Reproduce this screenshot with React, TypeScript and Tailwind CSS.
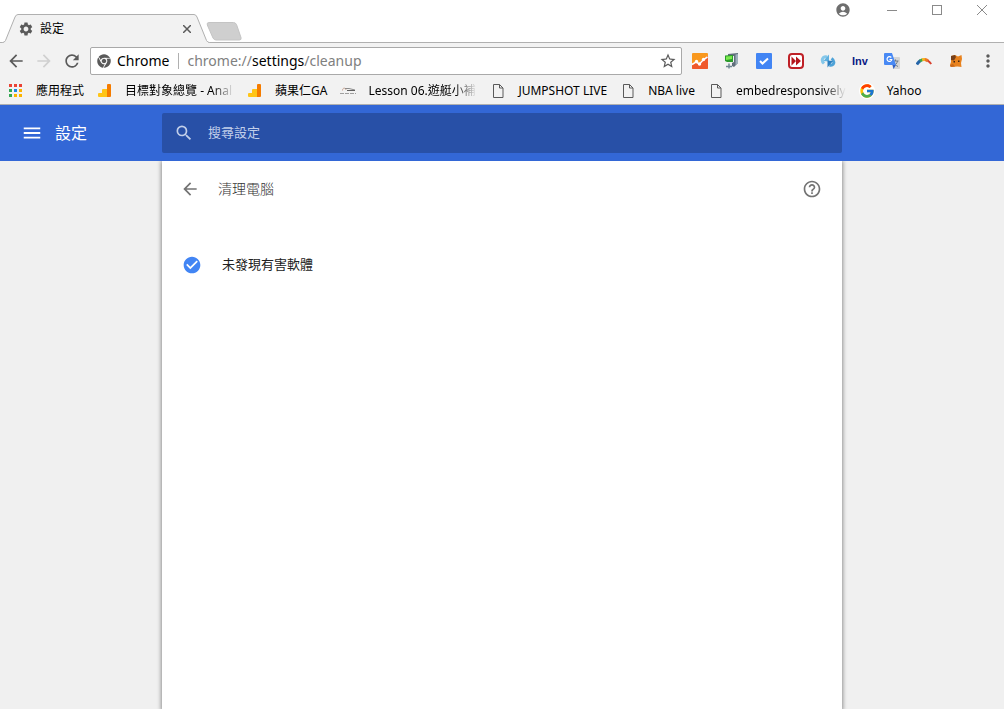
import { useState } from "react";
import type { ReactNode } from "react";
import clsx from "clsx";
import { FaChrome } from "react-icons/fa";
import { FcGoogle } from "react-icons/fc";
import {
  MdAccountCircle,
  MdArrowBack,
  MdArrowForward,
  MdCheckCircle,
  MdHelpOutline,
  MdMenu,
  MdMoreVert,
  MdRefresh,
  MdSearch,
  MdSettings,
  MdStarBorder,
} from "react-icons/md";

const AppsIcon = () => {
  const colors = [
    "#ea4335", "#ea4335", "#ea4335",
    "#34a853", "#1e88e5", "#fbb400",
    "#34a853", "#fbb400", "#fbb400",
  ];
  return (
    <svg viewBox="0 0 16 16" className="size-4">
      {colors.map((color, i) => (
        <rect key={i} x={1 + (i % 3) * 5} y={1 + Math.floor(i / 3) * 5} width="3" height="3" fill={color} />
      ))}
    </svg>
  );
};

const AnalyticsIcon = () => (
  <svg viewBox="0 0 16 16" className="size-4">
    <path d="M1 11a1 1 0 0 1 1-1h3V7a1 1 0 0 1 1-1h4v8H2a1 1 0 0 1-1-1z" fill="#ffc517" />
    <path d="M10 2a1 1 0 0 1 1-1h2a1 1 0 0 1 1 1v11a1 1 0 0 1-1 1h-3z" fill="#f57c00" />
  </svg>
);

const SketchIcon = () => (
  <svg viewBox="0 0 16 16" className="size-4" fill="none">
    <path d="M2.500 7.500c0-3 3-3 3.500-.5" stroke="#c9a491" />
    <path d="M5 5.500h4l6 1.500" stroke="#8c8c8c" />
    <path d="M7 7.500h8" stroke="#5f5f5f" />
    <path d="M0 10.500h16" strokeDasharray="4 1" stroke="#a0a0a0" />
  </svg>
);

const PageIcon = () => (
  <svg viewBox="0 0 16 16" className="size-4" fill="none" stroke="#5a5a5a">
    <path d="M3.500 1.500h6l3.500 3.500v9.500H3.500z" />
    <path d="M9.500 1.500V5H13" />
  </svg>
);

const ChartExtension = () => (
  <svg viewBox="0 0 16 16" className="size-4">
    <rect width="16" height="16" rx="1" fill="#f9981e" />
    <path d="M0 12.500L4 8l3 2.500 4-5L16 3v12a1 1 0 0 1-1 1H1a1 1 0 0 1-1-1z" fill="#f0592a" />
    <path d="M0 11.500l4-2.500 3.500 2 4-4.500L15.500 4" fill="none" stroke="#fff" strokeWidth="1.500" />
    <g fill="#fff">
      <circle cx="4.500" cy="8.500" r="1.700" />
      <circle cx="7.500" cy="11" r="1.700" />
      <circle cx="11.500" cy="6.500" r="1.700" />
    </g>
  </svg>
);

const CaptureExtension = () => (
  <svg viewBox="0 0 16 16" className="size-4">
    <path d="M4 1l10-1v10l-4 4-2-1v-3l2-1V3H4z" fill="#5f6f7b" />
    <path d="M11.500 1.500L14 1v9l-2.500 2z" fill="#9fb0bc" />
    <path d="M1 2.500L9 2v7H3L1 8z" fill="#2b9c2b" />
    <path d="M2 3.500L8 3v3L2 7z" fill="#7cea4e" />
    <path d="M5 10.500v5M2 13.500h6" stroke="#6f8792" strokeWidth="1.500" />
  </svg>
);

const CheckExtension = () => (
  <svg viewBox="0 0 16 16" className="size-4">
    <rect width="16" height="16" rx="1" fill="#4285f4" />
    <path d="M4 8l2.500 2.500L12 5.500" fill="none" stroke="#fff" strokeWidth="2" />
  </svg>
);

const SkipExtension = () => (
  <svg viewBox="0 0 16 16" className="size-4">
    <rect x="1" y="1" width="14" height="14" rx="3" fill="#fff" stroke="#bf2026" strokeWidth="2" />
    <path d="M3.500 3.500L8 8l-4.500 4.500zM8 3.500L13 8l-5 4.500z" fill="#b5161c" />
  </svg>
);

const SyncExtension = () => (
  <svg viewBox="0 0 16 16" className="size-4" fill="none">
    <path d="M4 10.500C.8 7.500 2.500 2.500 7 4" stroke="#84c7ea" strokeWidth="3" />
    <path d="M9 1.500v7L3.500 8z" fill="#5fb1e0" />
    <path d="M11.500 5.500c4 2.500 2.500 8-2 6.500" stroke="#4fa3d8" strokeWidth="3" />
    <path d="M7.500 14.500v-7L13 8z" fill="#2c7fbf" />
  </svg>
);

const TranslateExtension = () => (
  <svg viewBox="0 0 16 16" className="size-4">
    <path d="M7 4h8a1 1 0 0 1 1 1v10a1 1 0 0 1-1 1H9z" fill="#d5d5d5" />
    <path d="M8.500 8h6M11.500 6.500V8M13.500 8c-.5 2.500-2 4-4 5M10 9.500c1 2 2 3 4 4" fill="none" stroke="#6e7b86" strokeWidth="1" />
    <path d="M1 0h7l4 12H1a1 1 0 0 1-1-1V1a1 1 0 0 1 1-1z" fill="#4889f4" />
    <path d="M8.500 12H12l-2.500 4z" fill="#2f5fc4" />
    <path d="M7.300 4.500A2.400 2.400 0 1 0 7.800 6.500H5.500" fill="none" stroke="#fff" strokeWidth="1.200" />
  </svg>
);

const RainbowExtension = () => (
  <svg viewBox="0 0 16 16" className="size-4" fill="none" strokeWidth="3">
    <path d="M.8 11.500C2 9.800 3 8.600 4.500 7.600" stroke="#2565a8" />
    <path d="M4 8c.9-.7 1.600-1.100 2.600-1.400" stroke="#3fa447" />
    <path d="M6.200 6.700c1-.3 1.800-.4 2.800-.2" stroke="#f4b51f" />
    <path d="M8.800 6.500c1.200.2 2.200.7 3.200 1.500" stroke="#ee7724" />
    <path d="M11.700 7.600c1.300.8 2.400 1.900 3.500 3.400" stroke="#d8402d" strokeWidth="2" />
  </svg>
);

const FoxExtension = () => (
  <svg viewBox="0 0 16 16" className="size-4">
    <path d="M3 3l4-1 3 1.500L13.500 2l.5 4-1 4 .5 4-4-.500-6 .500-1.500-2L3 9z" fill="#e8821e" />
    <path d="M3 3l4-1 1 2-2 3.500L3 7z" fill="#75401b" />
    <path d="M2 12l3-1 2 2.500-4.500.5z" fill="#c9691a" />
    <path d="M5.500 8H7v1.500H5.500zM10 7.500h1.500V9H10z" fill="#3a2413" />
  </svg>
);

const extensions: { name: string; icon: ReactNode }[] = [
  { name: "Page analytics", icon: <ChartExtension /> },
  { name: "Screen capture", icon: <CaptureExtension /> },
  { name: "Tag assistant", icon: <CheckExtension /> },
  { name: "Skip", icon: <SkipExtension /> },
  { name: "Sync", icon: <SyncExtension /> },
  {
    name: "Inv",
    icon: <span className="font-['Liberation_Sans'] text-[11px] font-bold text-[#0b1a84]">Inv</span>,
  },
  { name: "Translate", icon: <TranslateExtension /> },
  { name: "Rainbow", icon: <RainbowExtension /> },
  { name: "Fox", icon: <FoxExtension /> },
  { name: "Menu", icon: <MdMoreVert className="size-5 text-[#5a5a5a]" /> },
];

const bookmarks: { name: string; icon: ReactNode; long?: boolean }[] = [
  { name: "應用程式", icon: <AppsIcon /> },
  { name: "目標對象總覽 - Anal", icon: <AnalyticsIcon />, long: true },
  { name: "蘋果仁GA", icon: <AnalyticsIcon /> },
  { name: "Lesson 06.遊艇小補", icon: <SketchIcon />, long: true },
  { name: "JUMPSHOT LIVE", icon: <PageIcon /> },
  { name: "NBA live", icon: <PageIcon /> },
  { name: "embedresponsively", icon: <PageIcon />, long: true },
  {
    name: "Yahoo",
    icon: (
      <span className="flex size-4 items-center justify-center rounded-full bg-white">
        <FcGoogle className="size-4" />
      </span>
    ),
  },
];

const TabStrip = () => (
  <div className="flex h-[43px] items-start justify-between border-b border-[#b0b0b0] bg-white">
    <div className="flex pt-3.5">
      <div className="relative h-[29px] w-[212px]">
        <svg viewBox="0 0 212 29" className="absolute inset-0 h-[29px] w-[212px]">
          <path
            d="M0 28.500h2.500q2 0 3-2L15 3q1-2.500 3-2.500h176q2 0 3 2.500l9.500 23.500q1 2 3 2H212V29H0z"
            fill="#f2f2f2"
          />
          <path
            d="M0 28.500h2.500q2 0 3-2L15 3q1-2.500 3-2.500h176q2 0 3 2.500l9.500 23.500q1 2 3 2H212"
            fill="none"
            stroke="#b0b0b0"
          />
          <path d="M5 28.500h203" stroke="#f2f2f2" />
        </svg>
        <div className="relative flex h-[29px] items-center pr-[17px] pl-[18px]">
          <MdSettings className="size-4 text-[#5a5a5a]" />
          <span className="ml-1.5 flex-1 text-xs">設定</span>
          <button type="button" aria-label="Close tab" className="p-1">
            <svg viewBox="0 0 8 8" className="size-2" stroke="#5a5a5a" strokeWidth="1.500">
              <path d="M0 0l8 8M8 0L0 8" />
            </svg>
          </button>
        </div>
      </div>
      <button type="button" aria-label="New tab" className="-ml-1.5 pt-1.5">
        <svg viewBox="0 0 36 19" className="h-[19px] w-9">
          <path
            d="M3 .5h24.500q2 0 3 2L35 15.500q.6 2.500-1.500 2.500H10q-2 0-3-2L1.300 3Q.5.500 3 .5z"
            fill="#cfcfcf"
            stroke="#c4c4c4"
          />
        </svg>
      </button>
    </div>
    <div className="flex h-5 items-center text-[#8a8a8a]">
      <button type="button" aria-label="Profile" className="flex w-[52px] justify-center">
        <MdAccountCircle className="size-4 text-[#6e6e6e]" />
      </button>
      <button type="button" aria-label="Minimize" className="flex w-[45px] justify-center">
        <span className="h-px w-2.5 bg-current" />
      </button>
      <button type="button" aria-label="Maximize" className="flex w-[45px] justify-center">
        <span className="size-2.5 border border-current" />
      </button>
      <button type="button" aria-label="Close" className="flex w-[45px] justify-center">
        <svg viewBox="0 0 10 10" className="size-2.5" stroke="currentColor">
          <path d="M0 0l10 10M10 0L0 10" />
        </svg>
      </button>
    </div>
  </div>
);

const Omnibox = () => {
  const [editing, setEditing] = useState(false);
  const [url, setUrl] = useState("chrome://settings/cleanup");
  const [scheme, rest] = url.split("://");
  const [host, ...path] = (rest ?? "").split("/");

  return (
    <div className="mr-0.5 ml-1 flex h-7 min-w-0 flex-1 items-center rounded-xs border border-[#a9a9a9] bg-white pr-1 pl-1.5 text-sm">
      <FaChrome className="size-3.5 shrink-0 text-[#5a5a5a]" />
      <span className="ml-1.5">Chrome</span>
      <span className="mr-2 ml-[9px] h-4 w-px bg-[#b0b0b0]" />
      {editing ? (
        <input
          autoFocus
          aria-label="Address"
          className="min-w-0 flex-1 outline-none"
          value={url}
          onChange={(e) => setUrl(e.target.value)}
          onBlur={() => setEditing(false)}
        />
      ) : (
        <button
          type="button"
          className="min-w-0 flex-1 truncate text-left text-[#808080]"
          onClick={() => setEditing(true)}
        >
          {scheme}://<span className="text-black">{host}</span>/{path.join("/")}
        </button>
      )}
      <button type="button" aria-label="Bookmark this page">
        <MdStarBorder className="size-[18px] text-[#5a5a5a]" />
      </button>
    </div>
  );
};

const Toolbar = () => (
  <div className="flex h-9 items-center bg-[#f2f2f2] pl-0.5">
    <button type="button" aria-label="Back" className="flex w-7 justify-center">
      <MdArrowBack className="size-5 text-[#5a5a5a]" />
    </button>
    <button type="button" aria-label="Forward" disabled className="flex w-7 justify-center">
      <MdArrowForward className="size-5 text-[#d0d0d0]" />
    </button>
    <button type="button" aria-label="Reload" className="flex w-7 justify-center">
      <MdRefresh className="size-5 text-[#5a5a5a]" />
    </button>
    <Omnibox />
    {extensions.map(({ name, icon }) => (
      <button key={name} type="button" aria-label={name} className="flex w-8 shrink-0 items-center justify-center">
        {icon}
      </button>
    ))}
  </div>
);

const BookmarksBar = () => (
  <nav className="flex h-[26px] items-center gap-[13px] overflow-hidden border-b border-[#b0b0b0] bg-[#f2f2f2] px-2 pb-0.5 text-xs">
    {bookmarks.map(({ name, icon, long }) => (
      <a key={name} href="#" className="flex shrink-0 items-center gap-3">
        {icon}
        <span
          className={clsx(
            "whitespace-nowrap",
            long && "min-w-[109px] mask-r-from-80% mask-r-to-100%"
          )}
        >
          {name}
        </span>
      </a>
    ))}
  </nav>
);

const SettingsHeader = () => (
  <header className="grid h-14 grid-cols-[1fr_minmax(0,680px)_1fr] items-center bg-[#3367d6] text-white">
    <div className="flex items-center pl-[21px]">
      <button type="button" aria-label="Main menu">
        <MdMenu className="size-[22px]" />
      </button>
      <h1 className="ml-3 text-base">設定</h1>
    </div>
    <label className="flex h-10 items-center rounded-xs bg-[#2850a7] px-3">
      <MdSearch className="size-5 text-[#c2cfea]" />
      <input
        type="search"
        aria-label="搜尋設定"
        placeholder="搜尋設定"
        className="ml-3.5 min-w-0 flex-1 text-[13px] outline-none placeholder:text-[#c2cfea]"
      />
    </label>
  </header>
);

const CleanupPage = () => (
  <main className="mx-auto w-full max-w-[680px] flex-1 bg-white shadow-[0_1px_4px_1px_rgba(0,0,0,0.4)]">
    <div className="flex h-14 items-center pr-5 pl-[18px] text-[#333333]">
      <button type="button" aria-label="Back to settings">
        <MdArrowBack className="size-5 text-[#737373]" />
      </button>
      <h2 className="ml-[18px] flex-1 text-sm font-light">清理電腦</h2>
      <button type="button" aria-label="Help">
        <MdHelpOutline className="size-5 text-[#737373]" />
      </button>
    </div>
    <div className="mt-6 flex h-12 items-center px-5">
      <MdCheckCircle className="size-5 text-[#4285f4]" />
      <p className="ml-5 text-[13px] text-[#212121]">未發現有害軟體</p>
    </div>
  </main>
);

const App = () => (
  <div className="flex min-h-screen flex-col bg-[#f0f0f0] font-['Noto_Sans','Noto_Sans_CJK_TC',sans-serif] text-black">
    <TabStrip />
    <Toolbar />
    <BookmarksBar />
    <div className="relative z-10">
      <SettingsHeader />
    </div>
    <CleanupPage />
  </div>
);

export default App;
